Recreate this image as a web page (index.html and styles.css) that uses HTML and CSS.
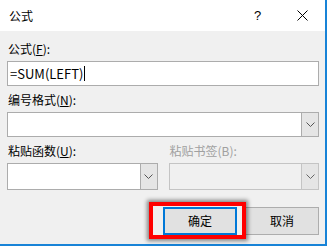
FILE: index.html
```html
<!DOCTYPE html>
<html>
<head>
	<meta charset="utf-8">
	<title>公式</title>
	<link rel="stylesheet" href="styles.css">
</head>
<body>
  <main class="dialog">
    <header class="titlebar">
      <span class="title">公式</span>
      <span class="help">?</span>
      <span class="close">
        <svg width="11" height="11" viewBox="0 0 11 11"><path d="M0.5 0.5 L10.5 10.5 M10.5 0.5 L0.5 10.5" stroke="#000" stroke-width="1"/></svg>
      </span>
    </header>

    <section class="body">
      <label class="lbl first">公式(<u>F</u>):</label>
      <div class="field">=SUM(LEFT)<span class="caret"></span></div>

      <label class="lbl">编号格式(<u>N</u>):</label>
      <div class="combo">
        <div class="combo-text"></div>
        <div class="combo-btn">
          <svg width="9" height="5" viewBox="0 0 9 5"><path d="M0.5 0.5 L4.5 4.5 L8.5 0.5" fill="none" stroke="#555" stroke-width="1"/></svg>
        </div>
      </div>

      <div class="pair">
        <div class="col">
          <label class="lbl">粘贴函数(<u>U</u>):</label>
          <div class="combo tall">
            <div class="combo-text"></div>
            <div class="combo-btn">
              <svg width="9" height="5" viewBox="0 0 9 5"><path d="M0.5 0.5 L4.5 4.5 L8.5 0.5" fill="none" stroke="#555" stroke-width="1"/></svg>
            </div>
          </div>
        </div>
        <div class="col">
          <label class="lbl off">粘贴书签(B):</label>
          <div class="combo tall disabled">
            <div class="combo-text"></div>
            <div class="combo-btn">
              <svg width="9" height="5" viewBox="0 0 9 5"><path d="M0.5 0.5 L4.5 4.5 L8.5 0.5" fill="none" stroke="#666" stroke-width="1"/></svg>
            </div>
          </div>
        </div>
      </div>

      <div class="buttons">
        <div class="mark">
          <button class="btn primary">确定</button>
        </div>
        <button class="btn cancel">取消</button>
      </div>
    </section>
  </main>
</body>
</html>
```

FILE: styles.css
```css
html, body{
  margin: 0;
  overflow: hidden;
}

body{
  font-family: "Noto Sans CJK SC", "Liberation Sans", sans-serif;
  font-size: 12px;
  color: #000;
}

.dialog{
  width: 325px;
  height: 244px;
  background: #f0f0f0;
  border-right: 2px solid #1883d7;
  border-bottom: 2px solid #1883d7;
  display: flex;
  flex-direction: column;
}

.titlebar{
  height: 31px;
  background: #fff;
  display: flex;
  align-items: center;
  padding-left: 9px;
}

.title{
  flex: 1;
  font-size: 12px;
  margin-top: -1px;
}

.help{
  width: 14px;
  margin-right: 29px;
  font-family: "Liberation Sans", sans-serif;
  font-size: 13px;
}

.close{
  width: 11px;
  height: 11px;
  margin-right: 17px;
  display: flex;
}

.body{
  padding: 0 6px 0 7px;
  display: flex;
  flex-direction: column;
}

.lbl{
  display: block;
  height: 16px;
  line-height: 16px;
  margin-top: 6px;
  margin-bottom: 4px;
  padding-left: 1px;
}

.lbl.first{
  margin-top: 10px;
}

.lbl.off{
  color: #a0a0a0;
}

.field{
  height: 23px;
  line-height: 23px;
  background: #fff;
  border: 1px solid #acacac;
  padding-left: 2px;
  font-size: 13px;
  display: flex;
  align-items: center;
}

.caret{
  width: 1px;
  height: 15px;
  background: #000;
  margin-left: 1px;
}

.combo{
  height: 23px;
  border: 1px solid #acacac;
  display: flex;
}

.combo.tall{
  height: 25px;
}

.combo-text{
  flex: 1;
  background: #fff;
}

.combo-btn{
  width: 16px;
  background: #e5e5e5;
  border-left: 1px solid #acacac;
  display: flex;
  align-items: center;
  justify-content: center;
}

.combo.disabled{
  border-color: #c4c4c4;
}

.combo.disabled .combo-text{
  background: #f0f0f0;
}

.combo.disabled .combo-btn{
  border-left-color: #c4c4c4;
}

.pair{
  display: flex;
  gap: 11px;
}

.col{
  flex: 1;
}

.buttons{
  display: flex;
  justify-content: flex-end;
  align-items: center;
  margin-top: 12px;
}

.mark{
  border: 4px solid #ff0000;
  padding: 0 5px 0 10px;
  height: 29px;
  display: flex;
  align-items: center;
  box-shadow: 0 0 4px 2px rgba(0,0,0,0.45);
  position: relative;
  z-index: 1;
}

.btn{
  width: 74px;
  height: 28px;
  background: #e1e1e1;
  border: 1px solid #adadad;
  font-family: "Noto Sans CJK SC", sans-serif;
  font-size: 12px;
  color: #000;
  padding: 0;
}

.primary{
  border: 2px solid #0078d7;
}

.cancel{
  margin-left: -1px;
}
```
